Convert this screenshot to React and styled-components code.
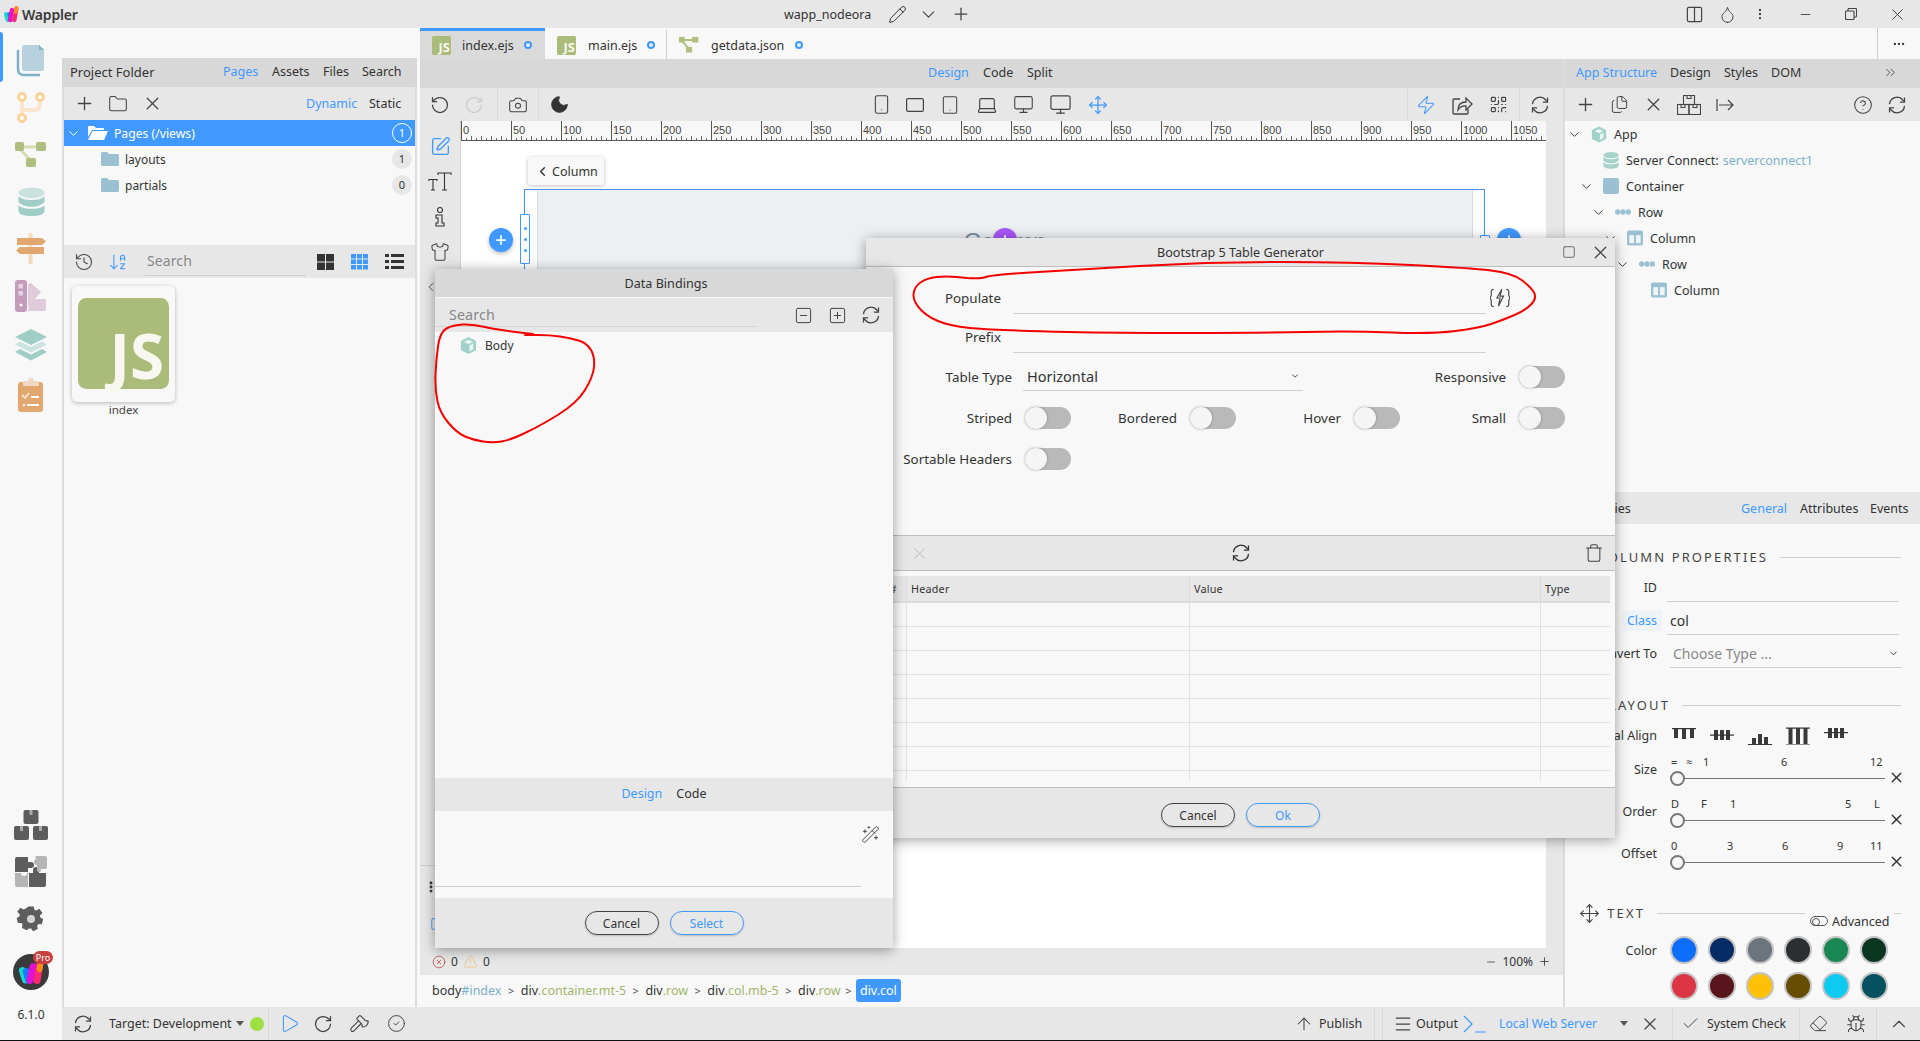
import React from 'react';
import styled, { createGlobalStyle } from 'styled-components';
import {
  Plus, Folder, X, ChevronDown, History, ArrowDownAZ, RotateCcw, RotateCw, Camera, Moon,
  Smartphone, Tablet, Laptop, Monitor, Move, Zap, QrCode, Pencil, SquarePen, Columns2, Droplet,
  EllipsisVertical, Minus, Ellipsis, ChevronsRight, CircleHelp, Square, SquareMinus, SquarePlus,
  Trash, WandSparkles, Check, Bug, Eraser, ChevronUp, Menu, ArrowUp, TriangleAlert, CircleX, Play,
  CircleCheck, Axe, ChevronLeft, Shirt, Files,
} from 'lucide-react';

const BLUE = '#4099ff';
const FONT = '"Noto Sans", "Open Sans", sans-serif';

const Global = createGlobalStyle`
  html, body { margin: 0; padding: 0; background: #f8f8f8; }
  body { font-family: ${FONT}; font-size: 12.5px; color: #333; overflow: hidden; }
  * { box-sizing: border-box; }
`;

const Page = styled.div`
  position: relative; width: 1920px; height: 1041px; display: flex; flex-direction: column;
  overflow: hidden; background: #f8f8f8; border-bottom: 1px solid #111;
`;
const Slot = styled.span`
  flex: none; width: ${p => p.$w || 34}px; height: 100%; display: inline-flex; align-items: center;
  justify-content: center; color: ${p => p.$c || '#444'};
  margin-left: ${p => p.$ml || 0}px; margin-right: ${p => p.$mr || 0}px;
  & > svg { flex: none; }
`;
const Sep = styled.span`
  flex: none; width: 1px; align-self: stretch; background: #d8d8d8; margin-left: ${p => p.$ml || 0}px;
`;
const Label = styled.span`
  flex: none; white-space: nowrap; width: ${p => (p.$w ? p.$w + 'px' : 'auto')}; margin-left: ${p => p.$ml || 0}px;
  color: ${p => (p.$on ? BLUE : p.$c || '#333')}; text-align: ${p => p.$a || 'left'};
  font-size: ${p => p.$fs || 12.5}px;
`;

/* title */
const TitleBar = styled.header`
  flex: none; height: 28px; background: #e7e7e7; display: flex; align-items: center; font-size: 14px;
`;
const Brand = styled.strong`
  margin-left: 2px; font-weight: 600; font-size: 14px; color: #3a3a3a; width: 54px; letter-spacing: -0.2px;
`;
const TitleName = styled.span`margin-left: 708px; width: 88px; color: #333; white-space: nowrap; font-size: 12.5px;`;
const Push = styled.span`margin-left: auto;`;

/* body */
const Body = styled.div`flex: 1; display: flex; min-height: 0;`;
const Rail = styled.nav`
  flex: none; width: 62px; display: flex; flex-direction: column; align-items: center; padding-top: 9px;
  position: relative; background: #f8f8f8;
`;
const RailItem = styled.div`
  flex: none; width: 100%; height: ${p => p.$h || 47}px; display: flex; align-items: center; justify-content: center;
  position: relative;
`;
const RailActive = styled.i`
  position: absolute; left: 0; top: -5px; width: 3px; height: 50px; background: ${BLUE}; border-radius: 0 3px 3px 0;
`;
const RailBottom = styled.div`margin-top: auto; width: 100%; padding-bottom: 10px;`;
const Version = styled.div`height: 28px; line-height: 26px; text-align: center; font-size: 12px;`;
const ProBadge = styled.span`
  position: absolute; left: 33px; top: 9px; width: 20px; height: 13px; background: #c8403f; border-radius: 7px;
  color: #fff; font-size: 9px; line-height: 13px; text-align: center;
`;

const Rest = styled.div`flex: 1; min-width: 0; display: flex; flex-direction: column;`;
const Workspace = styled.div`flex: 1; min-height: 0; display: flex;`;

/* project panel */
const ProjectPanel = styled.aside`
  flex: none; width: 358px; display: flex; flex-direction: column; padding-top: 30px; padding-right: 3px;
  border-right: 0; background: #f8f8f8;
`;
const HeaderBar = styled.div`
  flex: none; height: ${p => p.$h || 29}px; background: #d8d8d8; display: flex; align-items: center;
  padding-left: ${p => p.$pl || 0}px; padding-bottom: 2px; font-size: 12.5px;
`;
const ToolBar = styled.div`
  flex: none; height: ${p => p.$h || 33}px; background: #e7e7e7; display: flex; align-items: center;
  padding-left: ${p => p.$pl || 0}px; font-size: 12.5px;
`;
const PanelInner = styled.div`
  flex: 1; min-height: 0; display: flex; flex-direction: column; border-left: 2px solid #dcdcdc; border-right: 2px solid #dcdcdc;
`;
const FolderRow = styled.div`
  height: 26px; flex: none; display: flex; align-items: center; background: ${p => (p.$on ? BLUE : 'transparent')};
  color: ${p => (p.$on ? '#fff' : '#333')}; position: relative;
`;
const Count = styled.span`
  flex: none; margin-left: auto; margin-right: 3px; width: 20px; height: 20px; border-radius: 50%;
  text-align: center; line-height: ${p => (p.$on ? 18 : 20)}px; font-size: 11px;
  background: ${p => (p.$on ? 'transparent' : '#e7e7e7')}; border: ${p => (p.$on ? '1px solid #fff' : 0)};
`;
const PanelGap = styled.div`flex: none; height: 47px;`;
const FileArea = styled.div`flex: 1; padding: 8px 0 0 8px;`;
const FileCard = styled.div`
  width: 103px; height: 116px; background: #f8f8f8; border-radius: 5px; box-shadow: 0 1px 4px rgba(0,0,0,.28);
  display: flex; justify-content: center; padding-top: 12px;
`;
const FileCaption = styled.div`width: 103px; text-align: center; font-size: 11.5px; color: #444;`;
const JsTile = styled.div`
  flex: none; width: ${p => p.$s}px; height: ${p => p.$s}px; background: #aabb7a; color: #f8f8f0; border-radius: ${p => p.$s / 11}px;
  display: flex; align-items: flex-end; justify-content: flex-end; font-family: "Open Sans", sans-serif; font-weight: 700;
  font-size: ${p => p.$s * 0.68}px; line-height: ${p => p.$s * 0.68}px; padding-right: ${p => p.$s * 0.055}px;
  padding-bottom: ${p => p.$s * 0.02}px;
`;
const FieldGhost = styled.div`
  width: 161px; height: 28px; margin: 0 0 0 10px; border-bottom: 1px solid #d0d0d0; color: #888; font-size: 14px;
  line-height: 26px; padding-left: 2px; letter-spacing: .1px;
`;

/* center */
const MainCol = styled.div`flex: 1; min-width: 0; display: flex; flex-direction: column;`;
const TabBar = styled.div`flex: none; height: 31px; display: flex; background: #f8f8f8; border-left: 0;`;
const FileTab = styled.div`
  flex: none; width: ${p => p.$w}px; height: 31px; display: flex; align-items: center; padding-left: 12px;
  background: ${p => (p.$on ? '#dadada' : '#f8f8f8')}; border-top: 3px solid ${p => (p.$on ? BLUE : 'transparent')};
  border-right: ${p => (p.$sep ? '1px solid #ccc' : '0')};
`;
const DirtyDot = styled.i`
  flex: none; width: 8px; height: 8px; border-radius: 50%; border: 2px solid ${BLUE}; background: #e6f0ff;
  margin-left: ${p => p.$ml}px;
`;
const TabEnd = styled.div`
  margin-left: auto; width: 43px; border-left: 1px solid #ccc; display: flex; align-items: center; justify-content: center;
`;
const TinyGraph = styled.svg`flex: none;`;
const Panes = styled.div`flex: 1; min-height: 0; display: flex;`;
const Editor = styled.section`flex: none; width: 1143px; display: flex; flex-direction: column;`;
const CenterTabs = styled(HeaderBar)`padding-left: 508px;`;
const WorkArea = styled.div`flex: none; height: 827px; display: flex; background: #e7e7e7;`;
const ToolCol = styled.div`
  flex: none; width: 41px; display: flex; flex-direction: column; padding-top: 8px; border-right: 1px solid #d4d4d4;
`;
const ToolItem = styled.div`
  flex: none; height: 35px; width: 40px; display: flex; align-items: center; justify-content: ${p => p.$j || 'center'};
  color: ${p => p.$c || '#444'}; padding-left: ${p => p.$pl || 0}px;
`;
const ToolBottom = styled.div`
  margin-top: auto; margin-bottom: 8px; border-top: 1px solid #cfcfcf; height: 75px; padding-left: 4px; padding-top: 14px;
  display: flex; flex-direction: column; gap: 23px; color: #333;
`;
const ToolBlue = styled.span`display: flex; margin-left: 6px;`;
const Stage = styled.div`flex: none; width: 1085px; display: flex; flex-direction: column;`;
const RulerSvg = styled.svg`display: block; flex: none; background: #f8f8f8;`;
const Canvas = styled.div`flex: 1; position: relative; background: #fff; overflow: hidden; padding: 48px 0 0 63px;`;
const Crumbtip = styled.div`
  position: absolute; left: 67px; top: 16px; width: 76px; height: 28px; background: #f8f8f8; border-radius: 3px;
  box-shadow: 0 1px 4px rgba(0,0,0,.25); display: flex; align-items: center; padding-left: 7px; gap: 2px; font-size: 12.5px;
`;
const Selected = styled.div`
  position: relative; width: 961px; height: 160px; border: 1px solid #4a90e2; padding: 0 11px 0 12px;
`;
const ColFill = styled.div`
  height: 100%; background: #ecf0f3; border-left: 1px solid #d7dcdf; border-right: 1px solid #d7dcdf;
  text-align: center; padding-top: 38px; font-size: 24px; color: #7d8b9b; font-family: "Liberation Sans", sans-serif;
`;
const Handle = styled.div`
  position: absolute; left: ${p => p.$l}px; top: ${p => p.$t}px; width: 10px; height: 50px; border: 1px solid ${BLUE}; background: #fff;
  display: flex; flex-direction: column; align-items: center; justify-content: center; gap: 8px; border-radius: 1px;
  & > i { width: 3px; height: 3px; background: ${BLUE}; border-radius: 50%; }
`;
const RoundAdd = styled.div`
  position: absolute; left: ${p => p.$l}px; top: 38px; width: 24px; height: 24px; border-radius: 50%; background: ${p => p.$c};
  color: #fff; display: flex; align-items: center; justify-content: center; box-shadow: 0 2px 4px rgba(0,0,0,.25);
`;
const Gutter = styled.div`flex: 1; border-left: 0;`;
const StatusBar = styled.div`
  flex: none; height: 27px; background: #e7e7e7; display: flex; align-items: center; padding-left: 12px; padding-right: 12px; font-size: 12px; gap: 5px;
`;
const Crumbs = styled.div`
  flex: none; height: 32px; background: #f8f8f8; display: flex; align-items: center; padding-left: 12px; padding-bottom: 1px; white-space: pre;
  font-size: 12.5px;
`;
const CrumbTag = styled.span`color: #333;`;
const CrumbId = styled.span`color: #7bb0c6;`;
const CrumbClass = styled.span`color: #a3b56c;`;
const CrumbGt = styled.span`margin: 0 ${p => p.$m || 6.5}px; color: #555; font-size: 11px;`;
const CrumbOn = styled.span`background: ${BLUE}; color: #fff; border-radius: 3px; padding: 0 4px; height: 23px; line-height: 23px;`;

/* right panel */
const RightPanel = styled.aside`
  flex: none; width: 357px; display: flex; flex-direction: column; border-left: 2px solid #dcdcdc;
`;
const Tree = styled.div`flex: none; height: 371px; padding-top: 0;`;
const TreeRow = styled.div`
  height: 26px; display: flex; align-items: center; padding-left: ${p => p.$lv * 12}px; color: #333;
`;
const Chev = styled.span`flex: none; width: 18px; display: inline-flex; justify-content: center; color: #333;`;
const TreeIcon = styled.span`flex: none; width: 16px; height: 16px; margin: 0 7px 0 8px; display: inline-flex;`;
const Link = styled.span`color: #7bb0c6; margin-left: 4px;`;
const PropsTabs = styled.div`
  flex: none; height: 32px; background: #e7e7e7; display: flex; align-items: center; padding-left: 5px; font-size: 12.5px;
`;
const Props = styled.div`flex: 1; min-height: 0; padding-top: 23px;`;
const SectionHead = styled.div`
  height: 20px; display: flex; align-items: center; margin-top: ${p => p.$mt || 0}px; padding-right: 19px; margin-bottom: ${p => p.$mb || 0}px;
`;
const SectionName = styled.span`
  flex: none; width: ${p => p.$w}px; text-align: right; white-space: nowrap; letter-spacing: 2.1px; font-size: 13px; color: #444;
  overflow: hidden; direction: rtl;
`;
const Rule = styled.span`
  flex: ${p => (p.$w ? 'none' : 1)}; width: ${p => (p.$w ? p.$w + 'px' : 'auto')}; height: 1px; background: #cfcfcf; margin-left: ${p => (p.$ml === undefined ? 12 : p.$ml)}px;
`;
const PropRow = styled.div`height: 33px; display: flex; align-items: center; margin-top: ${p => p.$mt || 0}px;`;
const PropLabel = styled.span`
  flex: none; width: 92px; text-align: right; color: #333; white-space: nowrap; direction: rtl; overflow: hidden;
  align-self: ${p => (p.$top ? 'flex-start' : 'center')}; margin-top: ${p => p.$top ? p.$top : 0}px;
`;
const ClassLabel = styled.span`
  flex: none; width: 92px; display: flex; justify-content: flex-end; padding-right: 0;
  & > b { font-weight: 400; color: ${BLUE}; background: #eef3f8; border-radius: 3px; padding: 0 5px; height: 21px; line-height: 21px; margin-right: -5px; }
`;
const PropInput = styled.div`
  flex: none; width: ${p => p.$w || 232}px; height: 28px; margin: 0 0 0 ${p => p.$ml || 10}px; border-bottom: 1px solid #d0d0d0;
  display: flex; align-items: center; padding-left: 3px; font-size: 14px; color: ${p => p.$c || '#333'}; justify-content: space-between;
  padding-right: 3px;
`;
const AlignRow = styled.div`height: 32px; margin-top: 4px; display: flex; align-items: center;`;
const AlignSlots = styled.div`margin-left: 8px; display: flex; padding-top: 1px;`;
const AlignSlot = styled.span`flex: none; width: 38px; display: flex; justify-content: center;`;
const SliderBlock = styled.div`height: 42px; display: flex;`;
const SliderCol = styled.div`flex: none; margin-left: 13px; width: 215px; padding-left: 5px; padding-top: 4px;`;
const Ticks = styled.div`
  height: 14px; display: grid; grid-template-columns: ${p => p.$cols}; font-size: 11px; line-height: 14px; color: #333;
  white-space: nowrap; margin-left: -4px;
`;
const Track = styled.div`height: 18px; display: flex; align-items: center; position: relative; margin-left: -5px;`;
const Thumb = styled.i`
  position: absolute; left: 0; top: 2px; width: 15px; height: 15px; border-radius: 50%; background: #f8f8f8; border: 2px solid #777;
`;
const Line = styled.i`flex: 1; margin-left: 10px; height: 1px; background: #777;`;
const SliderClear = styled.span`flex: none; width: 22px; padding-top: 18px; display: flex; justify-content: center;`;
const Advanced = styled.span`
  flex: none; width: 84px; display: flex; align-items: center; gap: 4px; padding-top: 16px; margin-left: 5px; white-space: nowrap; font-size: 12.5px;
`;
const MiniSwitch = styled.i`
  flex: none; width: 18px; height: 10px; border: 1px solid #555; border-radius: 6px; position: relative;
  &::before { content: ''; position: absolute; left: 1px; top: 1px; width: 6px; height: 6px; border: 1px solid #555; border-radius: 50%; }
`;
const SwatchRow = styled.div`height: 28px; display: flex; align-items: center; margin-top: ${p => p.$mt}px;`;
const SwatchGrid = styled.div`margin-left: 8px; display: flex;`;
const SwatchCell = styled.span`flex: none; width: 38px; display: flex; justify-content: center;`;
const Swatch = styled.i`width: 28px; height: 28px; border-radius: 50%; background: ${p => p.$c}; border: 2px solid #c4c4c4;`;

/* bottom */
const BottomBar = styled.footer`
  flex: none; height: 33px; background: #e7e7e7; display: flex; align-items: center; font-size: 12.5px;
`;
const GreenDot = styled.i`flex: none; width: 14px; height: 14px; border-radius: 50%; background: #9ee041; margin-left: 6px;`;
const Caret = styled.i`
  flex: none; width: 0; height: 0; border-left: 4px solid transparent; border-right: 4px solid transparent; border-top: 5px solid #555;
  margin-left: ${p => p.$ml || 4}px;
`;

/* dialogs */
const Dialog = styled.div`
  position: absolute; left: ${p => p.$x}px; top: ${p => p.$y}px; width: ${p => p.$w}px; height: ${p => p.$h}px;
  display: flex; flex-direction: column; background: #f8f8f8; box-shadow: 0 2px 12px rgba(0,0,0,.38); z-index: ${p => p.$z};
`;
const DialogTitle = styled.div`
  flex: none; height: ${p => p.$h}px; background: ${p => p.$bg}; border-bottom: 1px solid ${p => p.$line};
  display: flex; align-items: center; justify-content: center; position: relative; font-size: 12.6px; color: #333;
  padding-left: ${p => p.$pl || 0}px; padding-top: ${p => p.$pt || 0}px;
`;
const DialogActs = styled.div`
  position: absolute; right: 0; top: 0; bottom: 0; display: flex; align-items: center;
`;
const FormBody = styled.div`flex: none; height: 269px; padding-top: 13px; border-bottom: 1px solid #bdbdbd; padding-right: 50px; font-size: 13.4px;`;
const FieldRow = styled.div`height: 34px; margin-bottom: 5px; display: flex; align-items: center;`;
const FieldLabel = styled.span`flex: none; width: ${p => p.$w}px; text-align: right; white-space: nowrap; padding-top: ${p => p.$pt || 0}px;`;
const FieldInput = styled.div`
  flex: none; width: 473px; height: 34px; margin-left: 12px; border-bottom: 1px solid #d0d0d0; display: flex; align-items: center;
  justify-content: flex-end; color: #444;
`;
const PopulateBtn = styled.span`
  display: inline-flex; align-items: center; margin-right: -24px; padding-top: 2px; font-size: 13px; color: #444;
`;
const FormRow = styled.div`
  height: 41px; display: flex; align-items: center; margin-top: ${p => p.$mt || 0}px;
`;
const FormGrid = styled.div`
  height: 41px; display: grid; grid-template-columns: 205px 165px 164px 165px; align-items: center;
`;
const Cell = styled.div`display: flex; justify-content: flex-end; align-items: center; gap: 13px; white-space: nowrap;`;
const SelectBox = styled.div`
  flex: none; width: 280px; height: 28px; margin-left: 11px; border-bottom: 1px solid #d0d0d0; display: flex; align-items: center;
  justify-content: space-between; font-size: 14.5px; padding: 0 3px 0 4px;
`;
const Toggle = styled.i`
  flex: none; width: 46px; height: 22px; border-radius: 11px; background: #b9b9b9; position: relative;
  &::before { content: ''; position: absolute; left: 0; top: 0; width: 22px; height: 22px; border-radius: 50%; background: #f5f5f5; box-shadow: 0 0 3px rgba(0,0,0,.3); }
`;
const DlgTools = styled.div`
  flex: none; height: 35px; background: #e7e7e7; border-bottom: 1px solid #bdbdbd; display: flex; align-items: center; position: relative;
  justify-content: center;
`;
const DlgToolLeft = styled.span`position: absolute; left: 44px; color: #bbb; display: flex;`;
const DlgToolRight = styled.span`position: absolute; right: 11px; color: #444; display: flex;`;
const TableWrap = styled.div`flex: none; height: 216px; padding: 5px 5px 0 5px;`;
const TableHead = styled.div`
  height: 27px; background: #e7e7e7; border-bottom: 2px solid #dcdcdc; display: grid; grid-template-columns: 36px 283px 351px 69px;
  font-size: 10.8px; line-height: 25px; letter-spacing: .2px;
`;
const HeadCell = styled.span`
  padding-left: 4px; padding-right: ${p => p.$pr || 0}px; border-right: ${p => (p.$last ? 0 : '1px solid #dcdcdc')}; text-align: ${p => (p.$a || 'left')};
`;
const TableRowEl = styled.div`
  height: ${p => (p.$end ? 10 : 24)}px; display: grid; grid-template-columns: 36px 283px 351px 69px; border-bottom: ${p => (p.$end ? 0 : '1px solid #e2e2e2')};
`;
const BodyCell = styled.span`border-right: ${p => (p.$last ? 0 : '1px solid #e2e2e2')};`;
const DlgFooter = styled.div`
  flex: none; height: ${p => p.$h}px; background: #e7e7e7; border-top: ${p => (p.$line ? '1px solid #bdbdbd' : 0)};
  display: flex; align-items: center; justify-content: center; gap: 11px; padding-top: ${p => p.$pt || 0}px;
`;
const PillBtn = styled.button`
  width: 74px; height: 24px; border-radius: 12px; border: 1px solid ${p => (p.$primary ? BLUE : '#444')}; background: transparent;
  color: ${p => (p.$primary ? BLUE : '#333')}; font: 12px ${FONT}; padding: 0; box-shadow: 0 1px 2px rgba(0,0,0,.2);
`;
const BindSearch = styled.div`
  flex: none; height: 34px; background: #e7e7e7; display: flex; align-items: center;
`;
const BindField = styled.div`
  flex: none; width: 322px; height: 29px; border-bottom: 1px solid #d4d4d4; color: #888; font-size: 14.3px; padding-left: 14px;
  align-self: flex-start; line-height: 33px; letter-spacing: .1px;
`;
const BindBody = styled.div`flex: 1; padding: 0 0 0 25px;`;
const BindRow = styled.div`height: 26px; display: flex; align-items: center; gap: 8px; font-size: 12px;`;
const BindTabs = styled.div`
  flex: none; height: 33px; background: #e7e7e7; display: flex; align-items: center; justify-content: center; font-size: 12.5px; gap: 14px; padding-bottom: 2px;
`;
const BindEditor = styled.div`flex: none; height: 87px; display: flex; position: relative;`;
const BindArea = styled.div`flex: none; width: 426px; height: 76px; border-bottom: 1px solid #d0d0d0;`;
const WandSpot = styled.span`margin-left: 0; width: 20px; padding-top: 14px; display: flex; color: #444;`;
const Scribble = styled.svg`position: absolute; left: 0; top: 0; pointer-events: none; z-index: 5;`;

/* icon drawings */
const s = 1.5;
const I = ({ as: C, size = 19, sw = s, ...r }) => <C size={size} strokeWidth={sw} {...r} />;

const Refresh = ({ size = 20 }) => (
  <svg width={size} height={size} viewBox="0 0 24 24" fill="none" stroke="currentColor" strokeWidth="1.5">
    <path d="M3 11a9 9 0 0 1 16-5l2 2" /><path d="M21 3v5.500h-5.500" />
    <path d="M21 13a9 9 0 0 1-16 5l-2-2" /><path d="M3 21v-5.500h5.500" />
  </svg>
);
const Restore = () => (
  <svg width="12" height="12" viewBox="0 0 12 12" fill="none" stroke="#444" strokeWidth="1.100">
    <rect x=".5" y="3" width="8.500" height="8.500" rx="1" /><path d="M3 3V1.500q0-1 1-1h6.500q1 0 1 1V8q0 1-1 1H9" />
  </svg>
);
const Landscape = () => (
  <svg width="18" height="14" viewBox="0 0 18 14" fill="none" stroke="#444" strokeWidth="1.200"><rect x=".6" y=".6" width="16.800" height="12.800" rx="1.500" /></svg>
);
const ShareBox = () => (
  <svg width="22" height="20" viewBox="0 0 22 20" fill="none" stroke="#444" strokeWidth="1.300">
    <path d="M9 4H3Q2 4 2 5v13q0 1 1 1h13q1 0 1-1v-4" />
    <path d="M7 15q0-8 8-8V3l6 6-6 6v-4q-5-.5-8 4z" />
  </svg>
);
const FolderFill = () => (
  <svg width="18" height="14" viewBox="0 0 18 14"><path d="M0 1.500Q0 0 1.500 0H6l2 2h8.500Q18 2 18 3.500V12.500Q18 14 16.500 14h-15Q0 14 0 12.500z" fill="#9bc0d2" /></svg>
);
const FolderOpenWhite = () => (
  <svg width="20" height="14" viewBox="0 0 20 14"><path d="M0 1Q0 0 1 0h5l2 2h7q1 0 1 1v1H4L0 11z" fill="#fff" /><path d="M4.500 5H20l-4 9H0z" fill="#fff" /></svg>
);
const SvgLogo = ({ size = 16 }) => (
  <svg width={size} height={size} viewBox="0 0 20 20">
    <rect x="2" y="7" width="5" height="12" rx="2.500" fill="#10dcd0" transform="rotate(-14 4 13)" />
    <rect x="6" y="7" width="5" height="12" rx="2.500" fill="#1e78ff" transform="rotate(-14 8 13)" />
    <rect x="7" y="2" width="5" height="17" rx="2.500" fill="#f010c8" transform="rotate(12 9 10)" />
    <rect x="12" y="0" width="5" height="19" rx="2.500" fill="#ff2a70" transform="rotate(10 14 10)" />
    <rect x="13" y="0" width="4.500" height="9" rx="2.200" fill="#ff8a1c" transform="rotate(10 14 5)" />
  </svg>
);
const RailFiles = () => (
  <svg width="30" height="32" viewBox="0 0 30 32">
    <path d="M2 6v18q0 6 6 6h15" fill="none" stroke="#7fb2c8" strokeWidth="2.500" strokeLinecap="round" />
    <path d="M6 2q0-2 2-2h15l5 5v19q0 2-2 2H8q-2 0-2-2z" fill="#b7d1de" />
    <path d="M23 0l5 5h-5z" fill="#7fb2c8" />
  </svg>
);
const RailGit = () => (
  <svg width="28" height="32" viewBox="0 0 28 32" fill="none">
    <path d="M5 8v17M23 8v4q0 6-6 6H5" stroke="#fae6cc" strokeWidth="4" />
    <g stroke="#f9d39a" strokeWidth="3" fill="#fff"><circle cx="5" cy="5" r="3.500" /><circle cx="23" cy="5" r="3.500" /><circle cx="5" cy="26" r="3.500" /></g>
  </svg>
);
const RailGraph = () => (
  <svg width="32" height="26" viewBox="0 0 32 26">
    <path d="M8 5h16M6 8l11 12" stroke="#d3dcb4" strokeWidth="3" fill="none" />
    <rect x="0" width="9" height="9" rx="2" fill="#aebf7f" /><rect x="21" width="10" height="9" rx="2" fill="#aebf7f" /><rect x="11" y="16" width="10" height="9" rx="2" fill="#aebf7f" />
  </svg>
);
const Db = ({ w = 28, h = 30, a = '#c9e2dd', b = '#a0cdc6' }) => (
  <svg width={w} height={h} viewBox="0 0 28 30">
    <ellipse cx="14" cy="5.500" rx="13.500" ry="5.500" fill={a} />
    <path d="M.5 9Q5 13 14 13t13.500-4v6Q23 20 14 20T.5 15z" fill={b} />
    <path d="M.5 18.500Q5 22 14 22t13.500-3.500V24q0 5.500-13.500 5.500T.5 24z" fill={b} />
  </svg>
);
const RailSign = () => (
  <svg width="32" height="32" viewBox="0 0 32 32">
    <rect x="13.500" width="4" height="31" rx="1.500" fill="#f3d9be" />
    <path d="M2 5h25l4 3.500-4 3.500H2z" fill="#e2a76f" /><path d="M29 14H5l-4 3.500L5 21h24z" fill="#e2a76f" />
  </svg>
);
const RailPalette = () => (
  <svg width="32" height="32" viewBox="0 0 32 32">
    <path d="M13 4l3-1 10 9-13 15z" fill="#e0cbdc" />
    <path d="M16 19h15v10q0 2-2 2H13z" fill="#e0cbdc" />
    <rect x="0" width="12" height="32" rx="3" fill="#c39cbc" />
    <rect x="3.500" y="4" width="4.500" height="4.500" fill="#e6d3e2" /><rect x="3.500" y="11" width="4.500" height="4.500" fill="#e6d3e2" /><circle cx="6" cy="25" r="1.500" fill="#f8f8f8" />
  </svg>
);
const RailLayers = () => (
  <svg width="32" height="32" viewBox="0 0 32 32">
    <path d="M16 0l16 8-16 8L0 8z" fill="#a0cdc6" />
    <path d="M5 12.500l11 5.500 11-5.500 5 3-16 8-16-8z" fill="#cbe3df" />
    <path d="M5 20l11 5.500L27 20l5 3-16 8.500L0 23z" fill="#a0cdc6" />
  </svg>
);
const RailClip = () => (
  <svg width="26" height="34" viewBox="0 0 26 34">
    <rect y="4" width="25" height="30" rx="3" fill="#e2a76f" />
    <path d="M5 8V4q0-1 1-1h4q0-3 3-3t3 3h4q1 0 1 1v4z" fill="#f0d8c2" />
    <path d="M4 17l3 3 4-5" stroke="#f7e6d4" strokeWidth="1.800" fill="none" />
    <path d="M13 19h8M9 27h12" stroke="#fff" strokeWidth="2" /><circle cx="6" cy="27" r="1.500" fill="#f7e6d4" />
  </svg>
);
const RailBoxes = () => (
  <svg width="34" height="30" viewBox="0 0 34 30" fill="#5d5d5d">
    <rect x="9.500" y="0" width="15" height="14" rx="2" /><rect y="16" width="15" height="14" rx="2" /><rect x="19" y="16" width="15" height="14" rx="2" />
    <g fill="#aaa"><rect x="15.500" y="0" width="3" height="5" /><rect x="6" y="16" width="3" height="5" /><rect x="25" y="16" width="3" height="5" /></g>
  </svg>
);
const RailPuzzle = () => (
  <svg width="32" height="32" viewBox="0 0 32 32">
    <path d="M0 3q0-2 2-2h11v5h3a3 3 0 0 1 0 6h-3v4H0z" fill="#5d5d5d" />
    <path d="M0 17h6a3 3 0 0 0 6 0h1v14H2q-2 0-2-2z" fill="#b5b5b5" />
    <path d="M14 17h4v-3a3 3 0 0 1 6 0v3h7v12q0 2-2 2H14z" fill="#5d5d5d" />
    <path d="M20 2q0-2 2-2h8q2 0 2 2v9q0 2-2 2h-4v1a2 2 0 0 1-4 0v-5a3 3 0 0 1 0-6z" fill="#b5b5b5" />
  </svg>
);
const RailGear = () => (
  <svg width="30" height="30" viewBox="0 0 24 24">
    <path fill="#5d5d5d" d="M9.500 1h5l.7 3.100 1.800.8 2.800-1.700 3.100 3.900-2.400 2.200.2 2 2.700 1.600-1.200 4.800-3.100-.1-1.300 1.500.6 3.100-4.500 2.100-1.800-2.600h-2.200L8 23.300l-4.500-2.100.6-3.100-1.300-1.500-3.100.1L-1.500 12 1.200 10.300l.2-2L-1 6.100 2.100 2.200l2.800 1.700 1.800-.8z" transform="translate(1.800 1.100) scale(.85)" />
    <circle cx="12" cy="12" r="3.200" fill="#d5d5d5" />
  </svg>
);
const Cube = ({ size = 17 }) => (
  <svg width={size} height={size} viewBox="0 0 18 18">
    <path d="M9 0l8 4v10l-8 4-8-4V4z" fill="#a0d2ca" />
    <path d="M9 3l5 2.200L9 7.500 4 5.200z" fill="#f8f8f8" opacity=".9" />
    <path d="M10 9l4-2v6l-4 2z" fill="#f8f8f8" opacity=".9" />
  </svg>
);
const TreeSquare = () => <svg width="16" height="16"><rect width="16" height="16" rx="2" fill="#9bc0d2" /></svg>;
const TreeDots = () => (
  <svg width="17" height="16" viewBox="0 0 17 16" fill="#9bc0d2"><circle cx="2.800" cy="8" r="2.800" /><circle cx="8.500" cy="8" r="2.800" /><circle cx="14.200" cy="8" r="2.800" /></svg>
);
const TreeCols = () => (
  <svg width="17" height="16" viewBox="0 0 17 16"><rect width="17" height="16" rx="2" fill="#9bc0d2" /><rect x="2.500" y="5" width="5" height="8.500" fill="#f0f4f7" /><rect x="9.500" y="5" width="5" height="8.500" fill="#f0f4f7" /></svg>
);
const Tiles = ({ n, c }) => {
  const rects = [];
  for (let y = 0; y < (n === 2 ? 2 : 3); y++) for (let x = 0; x < n; x++) rects.push(<rect key={x + '-' + y} x={x * (18 / n)} y={y * (n === 2 ? 8.500 : 5.500)} width={18 / n - 1} height={n === 2 ? 7.500 : 4.500} />);
  return <svg width="18" height="16" fill={c}>{rects}</svg>;
};
const RowsIcon = () => (
  <svg width="19" height="15" fill="#333"><rect width="4" height="3" /><rect x="6" width="13" height="3" /><rect y="6" width="4" height="3" /><rect x="6" y="6" width="13" height="3" /><rect y="12" width="4" height="3" /><rect x="6" y="12" width="13" height="3" /></svg>
);
const Cartons = () => (
  <svg width="24" height="20" viewBox="0 0 24 20" fill="none" stroke="#444" strokeWidth="1.100">
    <rect x="6.500" y=".5" width="11" height="9" /><rect x=".5" y="9.500" width="11.500" height="10" /><rect x="12" y="9.500" width="11.500" height="10" />
    <path d="M10 .5v3h4v-3M4 9.500v3h4v-3M16 9.500v3h4v-3" />
  </svg>
);
const Into = () => (
  <svg width="18" height="14" viewBox="0 0 18 14" fill="none" stroke="#444" strokeWidth="1.200"><path d="M1 1v12M3 7h14M12 2l5 5-5 5" /></svg>
);
const Populate = () => (
  <svg width="20" height="20" viewBox="0 0 16 16" fill="none" stroke="#444" strokeWidth=".9"><path d="M3 1Q1 1 1 3v3L0 8l1 2v3q0 2 2 2M13 1q2 0 2 2v3l1 2-1 2v3q0 2-2 2" /><path d="M9.500 1L5.500 8H8l-1.200 6.500 4-8H8z" /></svg>
);
const Align = ({ k }) => {
  const bars = {
    top: [[4, 1, 10], [12, 1, 11], [20, 1, 10], [0, 1, 24, 'h']],
    mid: [[6, 3, 10], [12, 3, 10], [18, 3, 10], [0, 7.500, 24, 'h']],
    bot: [[6, 11, 7], [12, 7, 11], [18, 10, 8], [0, 17, 24, 'h']],
    full: [[4.500, 1, 16], [12, 1, 16], [19.500, 1, 16], [0, 0.500, 24, 'h'], [0, 17.500, 24, 'h']],
    base: [[6, 1, 10], [12, 1, 10], [18, 1, 10], [0, 5, 24, 'h']],
  }[k];
  return (
    <svg width="24" height="18" viewBox="0 0 24 18">
      {bars.map((b, i) => (b[3] ? <rect key={i} x={b[0]} y={b[1]} width={b[2]} height="1.200" fill="#333" /> : <rect key={i} x={b[0] - 2} y={b[1]} width="4" height={b[2]} fill="#3a3a3a" />))}
    </svg>
  );
};

const smooth = pts => {
  let d = `M${pts[0][0]} ${pts[0][1]}`;
  for (let i = 1; i < pts.length - 1; i++) {
    const mx = (pts[i][0] + pts[i + 1][0]) / 2, my = (pts[i][1] + pts[i + 1][1]) / 2;
    d += ` Q${pts[i][0]} ${pts[i][1]} ${mx} ${my}`;
  }
  const l = pts[pts.length - 1];
  return d + ` L${l[0]} ${l[1]}`;
};
const LOOP_A = [[967, 278], [981, 279], [991, 275], [1069, 270], [1210, 262], [1352, 262], [1470, 268], [1512, 273], [1531, 287], [1537, 298], [1526, 310], [1503, 320], [1479, 328], [1432, 334], [1352, 331], [1257, 333], [1116, 333], [1022, 331], [960, 328], [930, 319], [913, 302], [914, 287], [927, 278], [946, 276], [967, 278]];
const LOOP_B = [[533, 334], [497, 330], [473, 324], [453, 325], [440, 332], [436, 360], [435, 390], [440, 413], [457, 433], [473, 440], [493, 443], [510, 440], [540, 426], [577, 403], [593, 377], [595, 357], [587, 343], [570, 338], [550, 335], [525, 335]];

const Ruler = () => {
  const items = [];
  for (let v = 0; v <= 1085; v += 5) {
    if (v % 50 === 0) {
      items.push(<path key={v} d={`M${v + .5} 0V20`} stroke="#555" />);
      items.push(<text key={'t' + v} x={v + 2} y={12.500} fontSize="11" fill="#444" fontFamily='"Liberation Sans", sans-serif'>{v}</text>);
    } else {
      items.push(<path key={v} d={`M${v + .5} ${v % 10 === 0 ? 15 : 17}V20`} stroke="#666" />);
    }
  }
  return (
    <RulerSvg width="1085" height="20">
      {items}
      <path d="M0 19.500H1085" stroke="#555" />
    </RulerSvg>
  );
};

const SliderRow = ({ label, cols, ticks }) => (
  <SliderBlock>
    <PropLabel $top={10}>{label}</PropLabel>
    <SliderCol>
      <Ticks $cols={cols}>{ticks.map((t, i) => <span key={i}>{t}</span>)}</Ticks>
      <Track><Thumb /><Line /></Track>
    </SliderCol>
    <SliderClear><X size={17} strokeWidth={2} color="#333" /></SliderClear>
  </SliderBlock>
);

const COLORS_A = ['#0d6efd', '#052c65', '#6c757d', '#2b2f32', '#198754', '#0a3622'];
const COLORS_B = ['#dc3545', '#58151c', '#ffc107', '#664d03', '#0dcaf0', '#055160'];

export default function App() {
  return (
    <Page>
      <Global />
      <TitleBar>
        <Slot $w={3} />
        <SvgLogo size={17} />
        <Brand>Wappler</Brand>
        <TitleName>wapp_nodeora</TitleName>
        <Slot $w={32} $c="#333" $ml={9}><I as={Pencil} size={19} sw={1.25} /></Slot>
        <Slot $w={30}><I as={ChevronDown} size={21} sw={1.25} /></Slot>
        <Slot $w={36}><I as={Plus} size={20} /></Slot>
        <Push />
        <Slot $w={33}><I as={Columns2} size={19} /></Slot>
        <Slot $w={33}><I as={Droplet} size={19} sw={1.25} /></Slot>
        <Slot $w={32} $mr={6}><EllipsisVertical size={14} strokeWidth={2} /></Slot>
        <Slot $w={46}><I as={Minus} size={15} /></Slot>
        <Slot $w={46}><Restore /></Slot>
        <Slot $w={46}><I as={X} size={19} sw={1.25} /></Slot>
      </TitleBar>

      <Body>
        <Rail>
          <RailItem><RailActive /><RailFiles /></RailItem>
          <RailItem><RailGit /></RailItem>
          <RailItem><RailGraph /></RailItem>
          <RailItem><Db w={27} h={30} /></RailItem>
          <RailItem><RailSign /></RailItem>
          <RailItem><RailPalette /></RailItem>
          <RailItem $h={52}><RailLayers /></RailItem>
          <RailItem><RailClip /></RailItem>
          <RailBottom>
            <RailItem><RailBoxes /></RailItem>
            <RailItem><RailPuzzle /></RailItem>
            <RailItem><RailGear /></RailItem>
            <RailItem $h={60}>
              <svg width="36" height="36" viewBox="0 0 36 36">
                <circle cx="18" cy="18" r="18" fill="#3a3a3a" />
                <rect x="7" y="13" width="7" height="17" rx="3.500" fill="#10dcd0" transform="rotate(-18 10 20)" />
                <rect x="11" y="14" width="7" height="16" rx="3.500" fill="#1e78ff" transform="rotate(-16 14 22)" />
                <rect x="15" y="9" width="7" height="21" rx="3.500" fill="#e010d8" transform="rotate(12 18 20)" />
                <rect x="22" y="7" width="7" height="23" rx="3.500" fill="#ff2a70" transform="rotate(10 25 18)" />
                <rect x="24" y="6" width="6" height="12" rx="3" fill="#ff8a1c" transform="rotate(10 26 12)" />
              </svg>
              <ProBadge>Pro</ProBadge>
            </RailItem>
            <Version>6.1.0</Version>
          </RailBottom>
        </Rail>

        <Rest>
          <Workspace>
            <ProjectPanel>
              <HeaderBar $pl={8}>
                <Label $w={153} $fs={13}>Project Folder</Label>
                <Label $on $w={49}>Pages</Label>
                <Label $w={51}>Assets</Label>
                <Label $w={39}>Files</Label>
                <Label>Search</Label>
              </HeaderBar>
              <PanelInner>
                <ToolBar $pl={3}>
                  <Slot><I as={Plus} size={21} /></Slot>
                  <Slot><I as={Folder} size={20} sw={1.25} /></Slot>
                  <Slot><I as={X} size={21} /></Slot>
                  <Label $on $w={63} $ml={137}>Dynamic</Label>
                  <Label>Static</Label>
                </ToolBar>
                <FolderRow $on>
                  <Slot $w={18} $c="#fff"><I as={ChevronDown} size={15} /></Slot>
                  <Slot $w={32} $c="#fff"><FolderOpenWhite /></Slot>
                  <Label $c="#fff" $fs={12.2}>Pages (/views)</Label>
                  <Count $on>1</Count>
                </FolderRow>
                <FolderRow>
                  <Slot $w={37} />
                  <FolderFill />
                  <Label $ml={6} $fs={12}>layouts</Label>
                  <Count>1</Count>
                </FolderRow>
                <FolderRow>
                  <Slot $w={37} />
                  <FolderFill />
                  <Label $ml={6} $fs={12}>partials</Label>
                  <Count>0</Count>
                </FolderRow>
                <PanelGap />
                <ToolBar $pl={3}>
                  <Slot><I as={History} size={20} sw={1.25} /></Slot>
                  <Slot $c={BLUE}><I as={ArrowDownAZ} size={20} sw={1.25} /></Slot>
                  <FieldGhost>Search</FieldGhost>
                  <Slot $w={34} $ml={3}><Tiles n={2} c="#333" /></Slot>
                  <Slot $w={34}><Tiles n={3} c={BLUE} /></Slot>
                  <Slot $w={34}><RowsIcon /></Slot>
                </ToolBar>
                <FileArea>
                  <FileCard><JsTile $s={91}>JS</JsTile></FileCard>
                  <FileCaption>index</FileCaption>
                </FileArea>
              </PanelInner>
            </ProjectPanel>

            <MainCol>
              <TabBar>
                <FileTab $w={125} $on>
                  <JsTile $s={19}>JS</JsTile>
                  <Label $ml={11} $w={50}>index.ejs</Label>
                  <DirtyDot $ml={12} />
                </FileTab>
                <FileTab $w={122} $sep>
                  <JsTile $s={19}>JS</JsTile>
                  <Label $ml={12} $w={47}>main.ejs</Label>
                  <DirtyDot $ml={12} />
                </FileTab>
                <FileTab $w={150}>
                  <TinyGraph width="20" height="18" viewBox="0 0 32 26">
                    <path d="M8 5h16M6 8l11 12" stroke="#aebf7f" strokeWidth="3" fill="none" />
                    <rect width="9" height="9" fill="#aebf7f" /><rect x="21" width="10" height="9" fill="#aebf7f" /><rect x="11" y="16" width="10" height="9" fill="#aebf7f" />
                  </TinyGraph>
                  <Label $ml={12} $w={72}>getdata.json</Label>
                  <DirtyDot $ml={12} />
                </FileTab>
                <TabEnd><Ellipsis size={14} strokeWidth={2} /></TabEnd>
              </TabBar>
              <Panes>
                <Editor>
                  <CenterTabs>
                    <Label $on $w={55}>Design</Label>
                    <Label $w={44}>Code</Label>
                    <Label>Split</Label>
                  </CenterTabs>
                  <ToolBar $pl={3}>
                    <Slot><I as={RotateCcw} size={20} /></Slot>
                    <Slot $c="#ccc"><I as={RotateCw} size={20} /></Slot>
                    <Sep $ml={6} />
                    <Slot $w={40}><I as={Camera} size={20} sw={1.25} /></Slot>
                    <Sep />
                    <Slot $w={40}><Moon size={21} strokeWidth={1} fill="#333" color="#333" /></Slot>
                    <Slot $w={285} />
                    <Slot $w={34}><I as={Smartphone} size={21} sw={1.25} /></Slot>
                    <Slot $w={34}><Landscape /></Slot>
                    <Slot $w={36}><I as={Tablet} size={20} sw={1.25} /></Slot>
                    <Slot $w={37}><I as={Laptop} size={22} sw={1.25} /></Slot>
                    <Slot $w={37}><I as={Monitor} size={21} sw={1.25} /></Slot>
                    <Slot $w={37}><I as={Monitor} size={23} sw={1.25} /></Slot>
                    <Slot $w={37} $c={BLUE}><I as={Move} size={20} /></Slot>
                    <Push />
                    <Sep />
                    <Slot $w={36} $c={BLUE}><I as={Zap} size={20} sw={1.25} /></Slot>
                    <Slot $w={36}><ShareBox /></Slot>
                    <Slot $w={36}><I as={QrCode} size={19} /></Slot>
                    <Sep $ml={3} />
                    <Slot $w={40}><Refresh /></Slot>
                    <Slot $w={3} />
                  </ToolBar>
                  <WorkArea>
                    <ToolCol>
                      <ToolItem $c={BLUE}><I as={SquarePen} size={21} /></ToolItem>
                      <ToolItem>
                        <svg width="24" height="20" viewBox="0 0 24 20" fill="none" stroke="#333" strokeWidth="1.100">
                          <path d="M1 9V7.500h8V9M5 7.500V18M3 18h4M10 3V1h13v2M16.500 1v17M14 18h5" />
                        </svg>
                      </ToolItem>
                      <ToolItem>
                        <svg width="12" height="20" viewBox="0 0 12 20" fill="none" stroke="#333" strokeWidth="1.100"><circle cx="6" cy="3" r="2.500" /><path d="M2 8h6v8h2v3H2v-3h2v-5H2z" /></svg>
                      </ToolItem>
                      <ToolItem><I as={Shirt} size={20} sw={1.25} /></ToolItem>
                      <ToolItem $j="flex-start" $pl={4}><ChevronLeft size={14} strokeWidth={1.500} /></ToolItem>
                      <ToolBottom>
                        <EllipsisVertical size={14} strokeWidth={3} />
                        <ToolBlue><Square size={14} color={BLUE} strokeWidth={1.500} /></ToolBlue>
                      </ToolBottom>
                    </ToolCol>
                    <Stage>
                      <Ruler />
                      <Canvas>
                        <Crumbtip><ChevronLeft size={15} strokeWidth={2.25} />Column</Crumbtip>
                        <Selected>
                          <ColFill>Column</ColFill>
                          <Handle $l={-5} $t={24}><i /><i /><i /></Handle>
                          <Handle $l={955} $t={45}><i /><i /><i /></Handle>
                          <RoundAdd $l={-36} $c={BLUE}><Plus size={14} strokeWidth={3} /></RoundAdd>
                          <RoundAdd $l={468} $c="#a855f7"><Plus size={14} strokeWidth={3} /></RoundAdd>
                          <RoundAdd $l={972} $c={BLUE}><Plus size={14} strokeWidth={3} /></RoundAdd>
                        </Selected>
                      </Canvas>
                    </Stage>
                    <Gutter />
                  </WorkArea>
                  <StatusBar>
                    <CircleX size={14} color="#b8403c" strokeWidth={1.250} />
                    <span>0</span>
                    <TriangleAlert size={15} color="#f2c078" strokeWidth={1.250} />
                    <span>0</span>
                    <Push />
                    <Minus size={12} strokeWidth={1.500} />
                    <span>100%</span>
                    <Plus size={13} strokeWidth={1.500} />
                  </StatusBar>
                  <Crumbs>
                    <CrumbTag>body</CrumbTag><CrumbId>#index</CrumbId><CrumbGt>&gt;</CrumbGt>
                    <CrumbTag>div</CrumbTag><CrumbClass>.container.mt-5</CrumbClass><CrumbGt>&gt;</CrumbGt>
                    <CrumbTag>div</CrumbTag><CrumbClass>.row</CrumbClass><CrumbGt>&gt;</CrumbGt>
                    <CrumbTag>div</CrumbTag><CrumbClass>.col.mb-5</CrumbClass><CrumbGt>&gt;</CrumbGt>
                    <CrumbTag>div</CrumbTag><CrumbClass>.row</CrumbClass><CrumbGt $m={4.5}>&gt;</CrumbGt>
                    <CrumbOn>div.col</CrumbOn>
                  </Crumbs>
                </Editor>

                <RightPanel>
                  <HeaderBar $pl={11}>
                    <Label $on $w={94}>App Structure</Label>
                    <Label $w={54}>Design</Label>
                    <Label $w={47}>Styles</Label>
                    <Label $w={112}>DOM</Label>
                    <ChevronsRight size={15} strokeWidth={1.250} />
                  </HeaderBar>
                  <ToolBar $pl={3}>
                    <Slot><I as={Plus} size={21} /></Slot>
                    <Slot><I as={Files} size={19} sw={1.25} /></Slot>
                    <Slot><I as={X} size={21} /></Slot>
                    <Slot $w={38}><Cartons /></Slot>
                    <Slot $w={34}><Into /></Slot>
                    <Push />
                    <Slot><I as={CircleHelp} size={20} sw={1.25} /></Slot>
                    <Slot><Refresh /></Slot>
                    <Slot $w={6} />
                  </ToolBar>
                  <Tree>
                    <TreeRow $lv={0}><Chev><I as={ChevronDown} size={15} /></Chev><TreeIcon><Cube /></TreeIcon>App</TreeRow>
                    <TreeRow $lv={1}><Chev /><TreeIcon><Db w={16} h={17} a="#a6d2ca" b="#a6d2ca" /></TreeIcon>Server Connect:<Link>serverconnect1</Link></TreeRow>
                    <TreeRow $lv={1}><Chev><I as={ChevronDown} size={15} /></Chev><TreeIcon><TreeSquare /></TreeIcon>Container</TreeRow>
                    <TreeRow $lv={2}><Chev><I as={ChevronDown} size={15} /></Chev><TreeIcon><TreeDots /></TreeIcon>Row</TreeRow>
                    <TreeRow $lv={3}><Chev><I as={ChevronDown} size={15} /></Chev><TreeIcon><TreeCols /></TreeIcon>Column</TreeRow>
                    <TreeRow $lv={4}><Chev><I as={ChevronDown} size={15} /></Chev><TreeIcon><TreeDots /></TreeIcon>Row</TreeRow>
                    <TreeRow $lv={5}><Chev /><TreeIcon><TreeCols /></TreeIcon>Column</TreeRow>
                  </Tree>
                  <PropsTabs>
                    <Label $w={171}>Properties</Label>
                    <Label $on $w={59}>General</Label>
                    <Label $w={70}>Attributes</Label>
                    <Label>Events</Label>
                  </PropsTabs>
                  <Props>
                    <SectionHead $mb={4}><SectionName $w={203}>COLUMN PROPERTIES</SectionName><Rule /></SectionHead>
                    <PropRow><PropLabel>ID</PropLabel><PropInput /></PropRow>
                    <PropRow><ClassLabel><b>Class</b></ClassLabel><PropInput>col</PropInput></PropRow>
                    <PropRow>
                      <PropLabel>Convert To</PropLabel>
                      <PropInput $ml={13} $c="#888">Choose Type ...<ChevronDown size={11} strokeWidth={2} color="#333" /></PropInput>
                    </PropRow>
                    <SectionHead $mt={25}><SectionName $w={105}>LAYOUT</SectionName><Rule /></SectionHead>
                    <AlignRow>
                      <PropLabel>Vertical Align</PropLabel>
                      <AlignSlots>
                        {['top', 'mid', 'bot', 'full', 'base'].map(k => <AlignSlot key={k}><Align k={k} /></AlignSlot>)}
                      </AlignSlots>
                    </AlignRow>
                    <SliderRow label="Size" cols="15px 17px 78px 89px 1fr" ticks={['=', '≈', '1', '6', '12']} />
                    <SliderRow label="Order" cols="30px 29px 115px 29px 1fr" ticks={['D', 'F', '1', '5', 'L']} />
                    <SliderRow label="Offset" cols="56px 55px 55px 33px 1fr" ticks={['0', '3', '6', '9', '11']} />
                    <SectionHead $mt={26}>
                      <Slot $w={30} $ml={9}><I as={Move} size={21} sw={1.25} /></Slot>
                      <SectionName $w={41}>TEXT</SectionName>
                      <Rule $w={148} />
                      <Advanced><MiniSwitch />Advanced</Advanced>
                      <Rule $ml={0} />
                    </SectionHead>
                    <SwatchRow $mt={13}>
                      <PropLabel>Color</PropLabel>
                      <SwatchGrid>{COLORS_A.map(c => <SwatchCell key={c}><Swatch $c={c} /></SwatchCell>)}</SwatchGrid>
                    </SwatchRow>
                    <SwatchRow $mt={8}>
                      <PropLabel />
                      <SwatchGrid>{COLORS_B.map(c => <SwatchCell key={c}><Swatch $c={c} /></SwatchCell>)}</SwatchGrid>
                    </SwatchRow>
                  </Props>
                </RightPanel>
              </Panes>
            </MainCol>
          </Workspace>

          <BottomBar>
            <Slot $w={42}><Refresh /></Slot>
            <Label $ml={5} $w={123}>Target:  Development</Label>
            <Caret />
            <GreenDot />
            <Sep $ml={4} />
            <Slot $w={3} />
            <Slot $c={BLUE}><I as={Play} size={21} sw={1.25} /></Slot>
            <Slot><I as={RotateCw} size={20} /></Slot>
            <Slot $w={38}><I as={Axe} size={21} sw={1.25} /></Slot>
            <Slot $w={36}><I as={CircleCheck} size={19} sw={1.25} /></Slot>
            <Push />
            <Slot $w={30}><I as={ArrowUp} size={20} sw={1.25} /></Slot>
            <Label $w={55}>Publish</Label>
            <Sep />
            <Slot $w={7} />
            <Sep />
            <Slot $w={7} />
            <Slot $w={26}><I as={Menu} size={20} /></Slot>
            <Label $w={46}>Output</Label>
            <Slot $w={26} $c={BLUE}>
              <svg width="24" height="18" viewBox="0 0 24 18" fill="none" stroke={BLUE} strokeWidth="1.200"><path d="M1 1l8 8-8 8M12 17h11" /></svg>
            </Slot>
            <Label $on $w={114} $ml={11} $fs={12.2}>Local Web Server</Label>
            <Caret $ml={7} />
            <Slot $w={44}><I as={X} size={20} /></Slot>
            <Sep />
            <Slot $w={34}><I as={Check} size={19} sw={1.25} /></Slot>
            <Label $w={92} $fs={12.2}>System Check</Label>
            <Sep />
            <Slot $w={36}><I as={Eraser} size={19} sw={1.25} /></Slot>
            <Slot $w={40}><I as={Bug} size={20} sw={1.25} /></Slot>
            <Sep />
            <Slot $w={43}><I as={ChevronUp} size={22} sw={1.25} /></Slot>
          </BottomBar>
        </Rest>
      </Body>

      <Dialog $x={866} $y={238} $w={749} $h={600} $z={2}>
        <DialogTitle $h={29} $bg="#e7e7e7" $line="#bdbdbd" $pt={1}>
          Bootstrap 5 Table Generator
          <DialogActs>
            <Slot $w={33}><I as={Square} size={14} sw={1.25} /></Slot>
            <Slot $w={30}><I as={X} size={21} /></Slot>
          </DialogActs>
        </DialogTitle>
        <FormBody>
          <FieldRow>
            <FieldLabel $w={135} $pt={2}>Populate</FieldLabel>
            <FieldInput><PopulateBtn><Populate /></PopulateBtn></FieldInput>
          </FieldRow>
          <FieldRow>
            <FieldLabel $w={135} $pt={2}>Prefix</FieldLabel>
            <FieldInput />
          </FieldRow>
          <FormRow $mt={-2}>
            <FieldLabel $w={146}>Table Type</FieldLabel>
            <SelectBox>Horizontal<ChevronDown size={10} strokeWidth={2} color="#333" /></SelectBox>
            <Push />
            <Cell>Responsive<Toggle /></Cell>
          </FormRow>
          <FormGrid>
            <Cell>Striped<Toggle /></Cell>
            <Cell>Bordered<Toggle /></Cell>
            <Cell>Hover<Toggle /></Cell>
            <Cell>Small<Toggle /></Cell>
          </FormGrid>
          <FormGrid>
            <Cell>Sortable Headers<Toggle /></Cell>
          </FormGrid>
        </FormBody>
        <DlgTools>
          <DlgToolLeft><I as={X} size={19} sw={1.25} /></DlgToolLeft>
          <Refresh size={20} />
          <DlgToolRight><I as={Trash} size={20} sw={1.25} /></DlgToolRight>
        </DlgTools>
        <TableWrap>
          <TableHead>
            <HeadCell $a="right" $pr={9}>#</HeadCell>
            <HeadCell>Header</HeadCell>
            <HeadCell>Value</HeadCell>
            <HeadCell $last>Type</HeadCell>
          </TableHead>
          {[0, 1, 2, 3, 4, 5, 6, 7].map(i => (
            <TableRowEl key={i} $end={i === 7}>
              <BodyCell /><BodyCell /><BodyCell /><BodyCell $last />
            </TableRowEl>
          ))}
        </TableWrap>
        <DlgFooter $h={51} $line $pt={4}>
          <PillBtn>Cancel</PillBtn>
          <PillBtn $primary>Ok</PillBtn>
        </DlgFooter>
      </Dialog>

      <Dialog $x={435} $y={269} $w={458} $h={679} $z={3}>
        <DialogTitle $h={29} $bg="#d8d8d8" $line="#f8f8f8" $pl={4}>Data Bindings</DialogTitle>
        <BindSearch>
          <BindField>Search</BindField>
          <Slot $w={34} $ml={29}><I as={SquareMinus} size={19} sw={1.25} /></Slot>
          <Slot $w={34}><I as={SquarePlus} size={19} sw={1.25} /></Slot>
          <Slot $w={34}><Refresh /></Slot>
        </BindSearch>
        <BindBody>
          <BindRow><Cube size={17} />Body</BindRow>
        </BindBody>
        <BindTabs><Label $on>Design</Label><Label>Code</Label></BindTabs>
        <BindEditor>
          <BindArea />
          <WandSpot><I as={WandSparkles} size={19} sw={1.25} /></WandSpot>
        </BindEditor>
        <DlgFooter $h={50}>
          <PillBtn>Cancel</PillBtn>
          <PillBtn $primary>Select</PillBtn>
        </DlgFooter>
      </Dialog>

      <Scribble width="1920" height="1041">
        <path d={smooth(LOOP_A)} fill="none" stroke="#f40000" strokeWidth="2" strokeLinecap="round" />
        <path d={smooth(LOOP_B)} fill="none" stroke="#f40000" strokeWidth="2" strokeLinecap="round" />
      </Scribble>
    </Page>
  );
}
